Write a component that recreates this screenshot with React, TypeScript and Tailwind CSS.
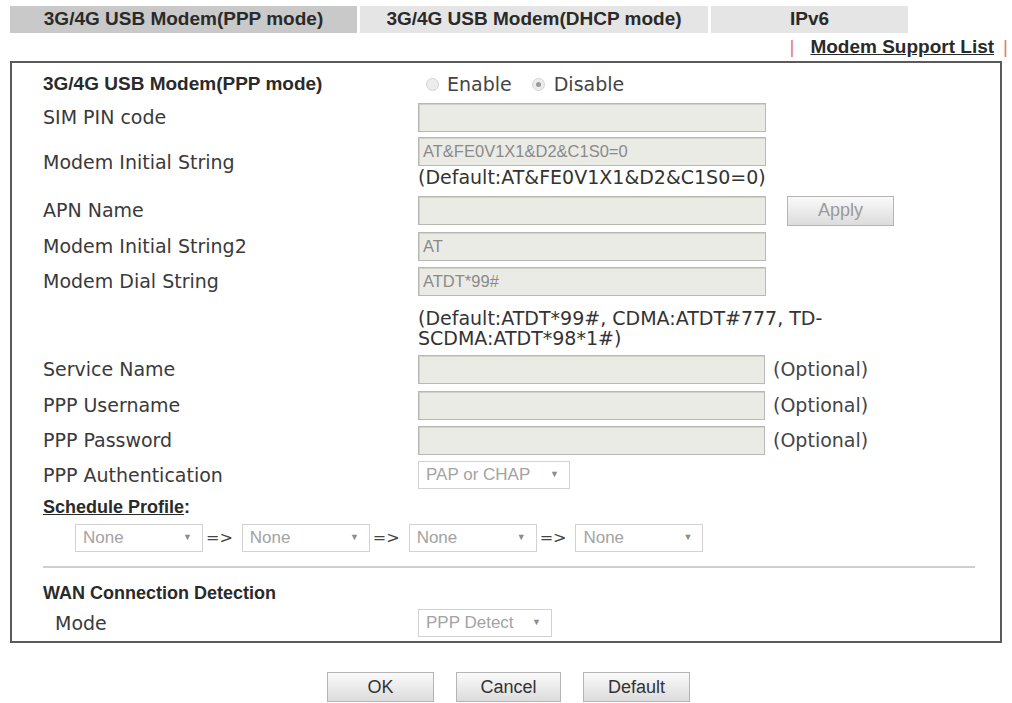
const sans = "font-['DejaVu_Sans',sans-serif]";
const arial = "font-['Liberation_Sans',Arial,sans-serif]";

function Field({ value = '', width = 'w-[348px]' }: { value?: string; width?: string }) {
  return (
    <div className={`${width} h-[29px] border border-[#b9b9b4] bg-[#ebebe6] shadow-[inset_1px_1px_0_#d2d2cc] flex items-center px-[4px] ${arial} text-[16.5px] text-[#8a8a8a]`}>
      {value}
    </div>
  );
}

function Select({ value, width }: { value: string; width: string }) {
  return (
    <div className={`${width} h-[28px] border border-[#d2d2d2] bg-white flex items-center justify-between pl-[7px] pr-[10px] ${arial} text-[17px] text-[#a3a3a3]`}>
      <span>{value}</span>
      <span className="text-[9px] text-[#8c8c8c]">▼</span>
    </div>
  );
}

function Radio({ checked }: { checked?: boolean }) {
  return (
    <span className="w-[13px] h-[13px] rounded-full border border-[#d4d4d4] bg-[#ececec] flex items-center justify-center">
      {checked && <span className="w-[5px] h-[5px] rounded-full bg-[#9a9a9a]" />}
    </span>
  );
}

function Btn({ label, muted, w = 'w-[107px]' }: { label: string; muted?: boolean; w?: string }) {
  return (
    <button className={`${w} h-[30px] border border-[#b5b5b5] bg-gradient-to-b from-[#fafafa] to-[#dcdcdc] ${arial} text-[18px] ${muted ? 'text-[#9a9a9a]' : 'text-[#333]'}`}>
      {label}
    </button>
  );
}

function Row({ label, h, children }: { label?: string; h: string; children?: React.ReactNode }) {
  return (
    <div className={`grid grid-cols-[375px_1fr] items-center ${h}`}>
      <div className={`${sans} text-[19px] text-[#3a3a3a]`}>{label}</div>
      <div className="flex items-center">{children}</div>
    </div>
  );
}

function Optional() {
  return <span className={`ml-[8px] ${sans} text-[19px] text-[#444]`}>(Optional)</span>;
}

function Arrow() {
  return <span className={`ml-[3px] mr-[9px] ${sans} text-[16px] text-[#444]`}>=&gt;</span>;
}

export default function App() {
  return (
    <div className="min-h-screen bg-white pl-[10px] pt-[6px] w-[1012px]">
      <div className={`flex gap-[3px] ${arial} font-bold text-[19px] text-[#2a2a2a]`}>
        <div className="w-[347px] h-[27px] bg-[#c9c9c9] flex items-center justify-center">3G/4G USB Modem(PPP mode)</div>
        <div className="w-[348px] h-[27px] bg-[#e5e5e5] flex items-center justify-center">3G/4G USB Modem(DHCP mode)</div>
        <div className="w-[197px] h-[27px] bg-[#e5e5e5] flex items-center justify-center">IPv6</div>
      </div>

      <div className={`w-[998px] h-[28px] flex items-center justify-end ${arial} font-bold text-[19px] text-[#2a2a2a]`}>
        <span className="text-[#e07a7a] font-normal">|</span>
        <a className="underline ml-[16px] mr-[9px]">Modem Support List</a>
        <span className="text-[#e07a7a] font-normal">|</span>
      </div>

      <div className="w-[992px] border-2 border-[#5a5a5a] pl-[31px] pr-[25px] pt-[4px] pb-[1px]">
        <div className="grid grid-cols-[375px_1fr] items-center h-[34px]">
          <div className={`${arial} font-bold text-[19px] text-[#2a2a2a]`}>3G/4G USB Modem(PPP mode)</div>
          <div className={`flex items-center ${sans} text-[19px] text-[#444]`}>
            <span className="ml-[8px]"><Radio /></span>
            <span className="ml-[8px]">Enable</span>
            <span className="ml-[20px]"><Radio checked /></span>
            <span className="ml-[9px]">Disable</span>
          </div>
        </div>

        <Row label="SIM PIN code" h="h-[32px]"><Field /></Row>

        <div className="grid grid-cols-[375px_1fr] items-center h-[59px]">
          <div className={`${sans} text-[19px] text-[#3a3a3a]`}>Modem Initial String</div>
          <div className="pt-[4px] pb-[4px]">
            <Field value="AT&FE0V1X1&D2&C1S0=0" />
            <div className={`${sans} text-[19px] leading-[22px] text-[#333]`}>(Default:AT&amp;FE0V1X1&amp;D2&amp;C1S0=0)</div>
          </div>
        </div>

        <Row label="APN Name" h="h-[37px]">
          <Field />
          <span className="ml-[21px]"><Btn label="Apply" muted /></span>
        </Row>
        <Row label="Modem Initial String2" h="h-[35px]"><Field value="AT" /></Row>
        <Row label="Modem Dial String" h="h-[35px]"><Field value="ATDT*99#" /></Row>

        <div className="grid grid-cols-[375px_1fr] h-[53px]">
          <div />
          <div className={`pt-[9px] ${sans} text-[19px] leading-[20px] text-[#333]`}>
            (Default:ATDT*99#, CDMA:ATDT#777, TD-<br />SCDMA:ATDT*98*1#)
          </div>
        </div>

        <Row label="Service Name" h="h-[35px]"><Field width="w-[347px]" /><Optional /></Row>
        <Row label="PPP Username" h="h-[37px]"><Field width="w-[347px]" /><Optional /></Row>
        <Row label="PPP Password" h="h-[33px]"><Field width="w-[347px]" /><Optional /></Row>
        <Row label="PPP Authentication" h="h-[36px]">
          <Select value="PAP or CHAP" width="w-[152px]" />
        </Row>

        <div className={`h-[28px] flex items-center ${arial} font-bold text-[18px] text-[#2a2a2a]`}>
          <span className="underline">Schedule Profile</span>:
        </div>
        <div className="h-[33px] flex items-center pl-[32px]">
          <Select value="None" width="w-[128px]" />
          <Arrow />
          <Select value="None" width="w-[128px]" />
          <Arrow />
          <Select value="None" width="w-[128px]" />
          <Arrow />
          <Select value="None" width="w-[128px]" />
        </div>

        <div className="h-[26px] flex items-center">
          <div className="w-[934px] h-[2px] bg-[#cfcfcf]" />
        </div>

        <div className={`h-[26px] flex items-center ${arial} font-bold text-[18px] text-[#2a2a2a]`}>WAN Connection Detection</div>
        <div className="grid grid-cols-[375px_1fr] items-center h-[34px]">
          <div className={`pl-[12px] ${sans} text-[19px] text-[#3a3a3a]`}>Mode</div>
          <div className="flex"><Select value="PPP Detect" width="w-[134px]" /></div>
        </div>
      </div>

      <div className="flex justify-center gap-[22px] pt-[29px] pr-[5px]">
        <Btn label="OK" />
        <Btn label="Cancel" w="w-[105px]" />
        <Btn label="Default" />
      </div>
    </div>
  );
}
